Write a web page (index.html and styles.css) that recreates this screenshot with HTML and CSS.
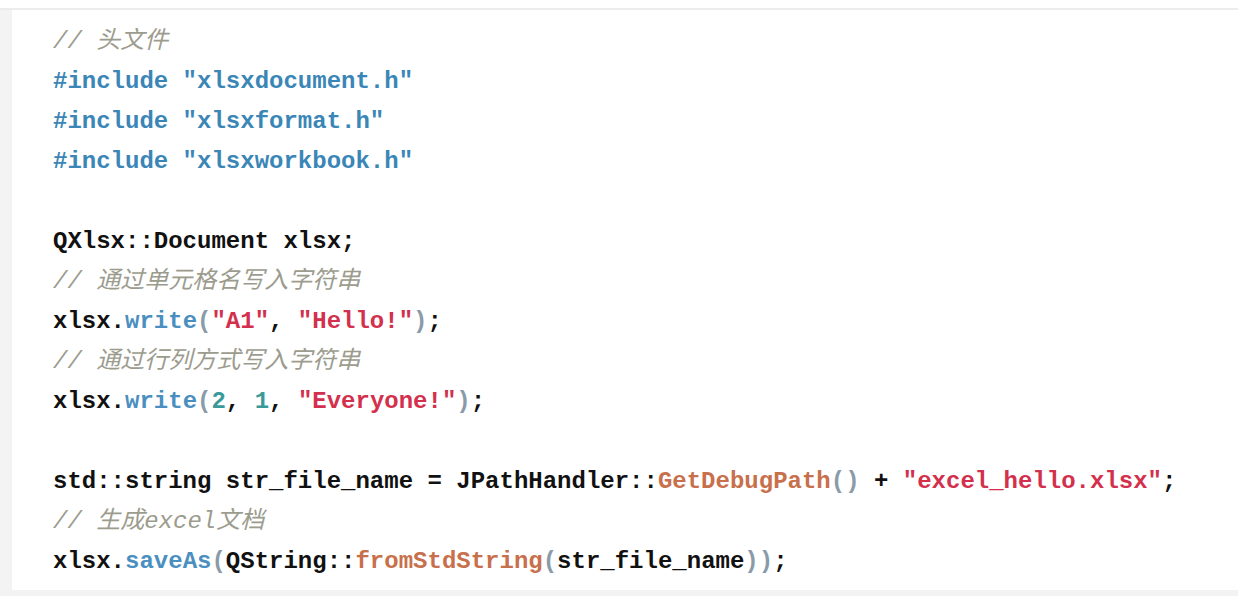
FILE: index.html
```html
<!DOCTYPE html>
<html lang="zh">
<head>
<meta charset="utf-8">
<title>QXlsx example</title>
<link rel="stylesheet" href="styles.css">
</head>
<body>
<div class="frame">
  <div class="panel">
    <div class="code">
      <div class="line"><span class="cm">// 头文件</span></div>
      <div class="line"><span class="pp">#include "xlsxdocument.h"</span></div>
      <div class="line"><span class="pp">#include "xlsxformat.h"</span></div>
      <div class="line"><span class="pp">#include "xlsxworkbook.h"</span></div>
      <div class="line"> </div>
      <div class="line">QXlsx::Document xlsx;</div>
      <div class="line"><span class="cm">// 通过单元格名写入字符串</span></div>
      <div class="line">xlsx.<span class="fn">write</span><span class="pa">(</span><span class="st">"A1"</span>, <span class="st">"Hello!"</span><span class="pa">)</span>;</div>
      <div class="line"><span class="cm">// 通过行列方式写入字符串</span></div>
      <div class="line">xlsx.<span class="fn">write</span><span class="pa">(</span><span class="nu">2</span>, <span class="nu">1</span>, <span class="st">"Everyone!"</span><span class="pa">)</span>;</div>
      <div class="line"> </div>
      <div class="line">std::string str_file_name = JPathHandler::<span class="fx">GetDebugPath</span><span class="pa">()</span> + <span class="st">"excel_hello.xlsx"</span>;</div>
      <div class="line"><span class="cm">// 生成excel文档</span></div>
      <div class="line">xlsx.<span class="fn">saveAs</span><span class="pa">(</span>QString::<span class="fx">fromStdString</span><span class="pa">(</span>str_file_name<span class="pa">))</span>;</div>
    </div>
  </div>
</div>
</body>
</html>
```

FILE: styles.css
```css
html, body {
  margin: 0;
  padding: 0;
  background: #ffffff;
}

.frame {
  padding-top: 8px;
  height: 596px;
  box-sizing: border-box;
  overflow: hidden;
}

.panel {
  border-top: 2px solid #ececec;
  background: #f3f3f3;
  padding: 0 0 6px 12px;
}

.code {
  background: #ffffff;
  padding: 10px 0 10px 41px;
  font-family: "Liberation Mono", "Noto Sans CJK SC", monospace;
  font-size: 24px;
  line-height: 40px;
  font-weight: bold;
  color: #111111;
}

.line {
  height: 40px;
  white-space: pre;
  padding-top: 2px;
  box-sizing: border-box;
}

.cm {
  color: #9c9c8e;
  font-style: italic;
  font-weight: normal;
}

.pp {
  color: #3a86b6;
}

.fn {
  color: #4a8fc0;
}

.pa {
  color: #8a9aa8;
}

.st {
  color: #d3304e;
}

.nu {
  color: #3a9a9a;
}

.fx {
  color: #c8704c;
}
```
